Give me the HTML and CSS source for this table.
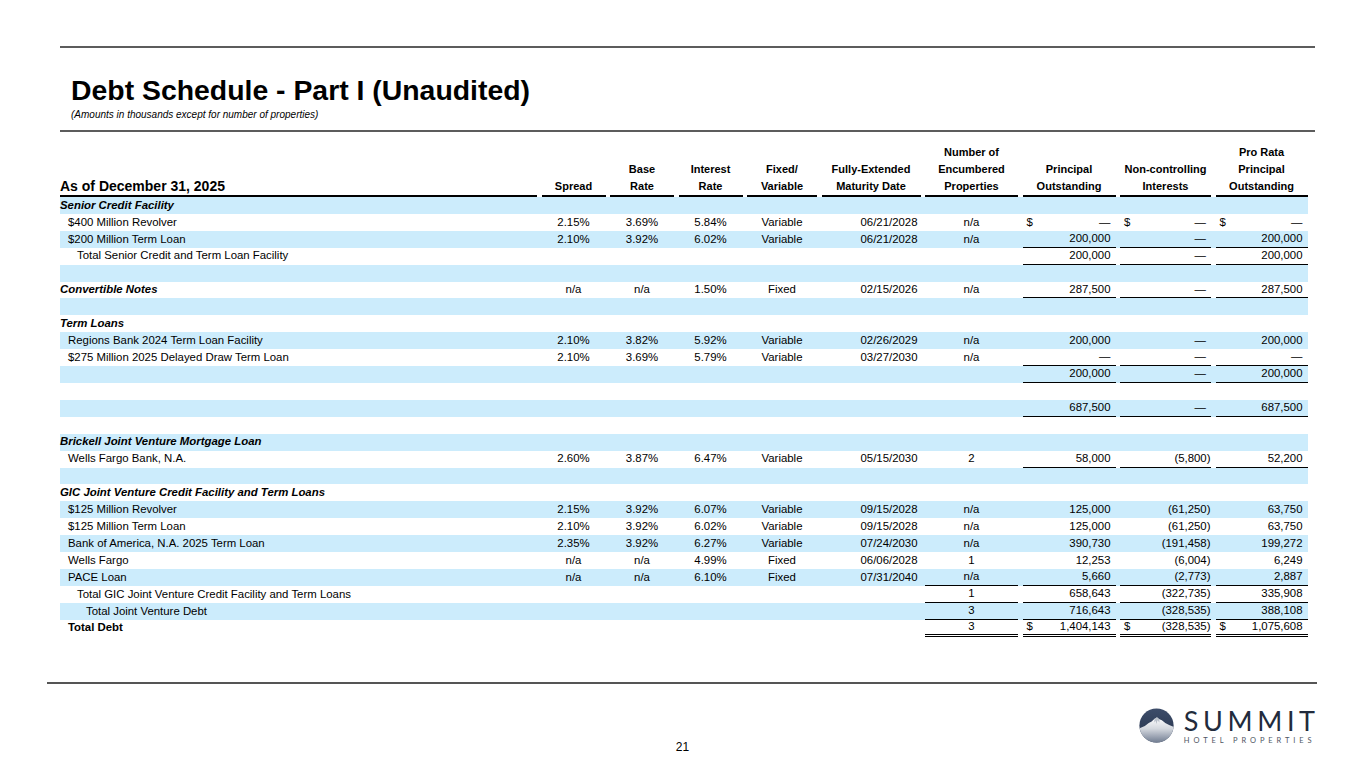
FILE: index.html
```html
<!DOCTYPE html>
<html lang="en">
<head>
<meta charset="utf-8">
<title>Debt Schedule - Part I (Unaudited)</title>
<link rel="stylesheet" href="styles.css">
</head>
<body>
<div class="slide">
  <header class="head">
    <div class="rule"></div>
    <h1 class="title">Debt Schedule - Part I (Unaudited)</h1>
    <p class="sub">(Amounts in thousands except for number of properties)</p>
    <div class="rule rule2"></div>
  </header>

  <section class="tbl">
    <div class="thead">
      <div class="th th-label">As of December 31, 2025</div>
      <div class="th">Spread</div>
      <div class="th">Base<br>Rate</div>
      <div class="th">Interest<br>Rate</div>
      <div class="th">Fixed/<br>Variable</div>
      <div class="th">Fully-Extended<br>Maturity Date</div>
      <div class="th">Number of<br>Encumbered<br>Properties</div>
      <div class="th">Principal<br>Outstanding</div>
      <div class="th">Non-controlling<br>Interests</div>
      <div class="th">Pro Rata<br>Principal<br>Outstanding</div>
    </div>

    <div class="tr b"><div class="l sec">Senior Credit Facility</div></div>
    <div class="tr">
      <div class="l i1">$400 Million Revolver</div>
      <div class="c">2.15%</div><div class="c">3.69%</div><div class="c">5.84%</div><div class="c">Variable</div><div class="m">06/21/2028</div><div class="c">n/a</div>
      <div class="d"><span>$</span><span>—</span></div><div class="d"><span>$</span><span>—</span></div><div class="d"><span>$</span><span>—</span></div>
    </div>
    <div class="tr b">
      <div class="l i1">$200 Million Term Loan</div>
      <div class="c">2.10%</div><div class="c">3.92%</div><div class="c">6.02%</div><div class="c">Variable</div><div class="m">06/21/2028</div><div class="c">n/a</div>
      <div class="n u">200,000</div><div class="n u">—</div><div class="n u">200,000</div>
    </div>
    <div class="tr">
      <div class="l i2">Total Senior Credit and Term Loan Facility</div>
      <div></div><div></div><div></div><div></div><div></div><div></div>
      <div class="n u">200,000</div><div class="n u">—</div><div class="n u">200,000</div>
    </div>
    <div class="tr b"></div>
    <div class="tr">
      <div class="l sec">Convertible Notes</div>
      <div class="c">n/a</div><div class="c">n/a</div><div class="c">1.50%</div><div class="c">Fixed</div><div class="m">02/15/2026</div><div class="c">n/a</div>
      <div class="n u">287,500</div><div class="n u">—</div><div class="n u">287,500</div>
    </div>
    <div class="tr b"></div>
    <div class="tr"><div class="l sec">Term Loans</div></div>
    <div class="tr b">
      <div class="l i1">Regions Bank 2024 Term Loan Facility</div>
      <div class="c">2.10%</div><div class="c">3.82%</div><div class="c">5.92%</div><div class="c">Variable</div><div class="m">02/26/2029</div><div class="c">n/a</div>
      <div class="n">200,000</div><div class="n">—</div><div class="n">200,000</div>
    </div>
    <div class="tr">
      <div class="l i1">$275 Million 2025 Delayed Draw Term Loan</div>
      <div class="c">2.10%</div><div class="c">3.69%</div><div class="c">5.79%</div><div class="c">Variable</div><div class="m">03/27/2030</div><div class="c">n/a</div>
      <div class="n u">—</div><div class="n u">—</div><div class="n u">—</div>
    </div>
    <div class="tr b">
      <div class="l"></div>
      <div></div><div></div><div></div><div></div><div></div><div></div>
      <div class="n u">200,000</div><div class="n u">—</div><div class="n u">200,000</div>
    </div>
    <div class="tr"></div>
    <div class="tr b">
      <div class="l"></div>
      <div></div><div></div><div></div><div></div><div></div><div></div>
      <div class="n u">687,500</div><div class="n u">—</div><div class="n u">687,500</div>
    </div>
    <div class="tr"></div>
    <div class="tr b"><div class="l sec">Brickell Joint Venture Mortgage Loan</div></div>
    <div class="tr">
      <div class="l i1">Wells Fargo Bank, N.A.</div>
      <div class="c">2.60%</div><div class="c">3.87%</div><div class="c">6.47%</div><div class="c">Variable</div><div class="m">05/15/2030</div><div class="c">2</div>
      <div class="n u">58,000</div><div class="n u neg">(5,800)</div><div class="n u">52,200</div>
    </div>
    <div class="tr b"></div>
    <div class="tr"><div class="l sec">GIC Joint Venture Credit Facility and Term Loans</div></div>
    <div class="tr b">
      <div class="l i1">$125 Million Revolver</div>
      <div class="c">2.15%</div><div class="c">3.92%</div><div class="c">6.07%</div><div class="c">Variable</div><div class="m">09/15/2028</div><div class="c">n/a</div>
      <div class="n">125,000</div><div class="n neg">(61,250)</div><div class="n">63,750</div>
    </div>
    <div class="tr">
      <div class="l i1">$125 Million Term Loan</div>
      <div class="c">2.10%</div><div class="c">3.92%</div><div class="c">6.02%</div><div class="c">Variable</div><div class="m">09/15/2028</div><div class="c">n/a</div>
      <div class="n">125,000</div><div class="n neg">(61,250)</div><div class="n">63,750</div>
    </div>
    <div class="tr b">
      <div class="l i1">Bank of America, N.A. 2025 Term Loan</div>
      <div class="c">2.35%</div><div class="c">3.92%</div><div class="c">6.27%</div><div class="c">Variable</div><div class="m">07/24/2030</div><div class="c">n/a</div>
      <div class="n">390,730</div><div class="n neg">(191,458)</div><div class="n">199,272</div>
    </div>
    <div class="tr">
      <div class="l i1">Wells Fargo</div>
      <div class="c">n/a</div><div class="c">n/a</div><div class="c">4.99%</div><div class="c">Fixed</div><div class="m">06/06/2028</div><div class="c">1</div>
      <div class="n">12,253</div><div class="n neg">(6,004)</div><div class="n">6,249</div>
    </div>
    <div class="tr b">
      <div class="l i1">PACE Loan</div>
      <div class="c">n/a</div><div class="c">n/a</div><div class="c">6.10%</div><div class="c">Fixed</div><div class="m">07/31/2040</div><div class="c u">n/a</div>
      <div class="n u">5,660</div><div class="n u neg">(2,773)</div><div class="n u">2,887</div>
    </div>
    <div class="tr">
      <div class="l i2">Total GIC Joint Venture Credit Facility and Term Loans</div>
      <div></div><div></div><div></div><div></div><div></div><div class="c u">1</div>
      <div class="n u">658,643</div><div class="n u neg">(322,735)</div><div class="n u">335,908</div>
    </div>
    <div class="tr b">
      <div class="l i3">Total Joint Venture Debt</div>
      <div></div><div></div><div></div><div></div><div></div><div class="c u">3</div>
      <div class="n u">716,643</div><div class="n u neg">(328,535)</div><div class="n u">388,108</div>
    </div>
    <div class="tr">
      <div class="l i1 strong">Total Debt</div>
      <div></div><div></div><div></div><div></div><div></div><div class="c uu">3</div>
      <div class="d uu"><span>$</span><span>1,404,143</span></div><div class="d uu neg"><span>$</span><span>(328,535)</span></div><div class="d uu"><span>$</span><span>1,075,608</span></div>
    </div>
  </section>

  <div class="rule rule3"></div>

  <footer class="foot">
    <div></div>
    <div class="pnum">21</div>
    <div class="logo">
      <svg class="mark" width="35" height="35" viewBox="0 0 36 36" aria-hidden="true">
        <defs>
          <clipPath id="lc"><circle cx="18" cy="18" r="17.6"/></clipPath>
          <linearGradient id="sky" x1="0" y1="0" x2="0" y2="1">
            <stop offset="0" stop-color="#3d4d6a"/>
            <stop offset="1" stop-color="#243149"/>
          </linearGradient>
          <linearGradient id="mt" x1="0" y1="0" x2="0" y2="1">
            <stop offset="0" stop-color="#ffffff"/>
            <stop offset="0.45" stop-color="#d3d7de"/>
            <stop offset="1" stop-color="#6e7a8f"/>
          </linearGradient>
        </defs>
        <g clip-path="url(#lc)">
          <rect width="36" height="36" fill="url(#sky)"/>
          <path d="M0 21 L6 18.5 L10 15.5 L13 14 L16 11 L18.5 9.5 L21 11.5 L23.5 12.5 L27 15.5 L31 17.5 L36 19.5 L36 36 L0 36 Z" fill="url(#mt)"/>
          <path d="M16 11 L15.5 15 L17 13 L18 16.5 L19 12.5 L21 15 L21 11.5 L18.5 9.5 Z" fill="#8d97a8" opacity="0.55"/>
        </g>
      </svg>
      <div class="wordmark">
        <div class="wm-main">SUMMIT</div>
        <div class="wm-sub">HOTEL PROPERTIES</div>
      </div>
    </div>
  </footer>
</div>
</body>
</html>
```

FILE: styles.css
```css
* { box-sizing: border-box; }

html, body {
  margin: 0;
  padding: 0;
  background: #ffffff;
}

body {
  font-family: "Liberation Sans", Arial, sans-serif;
  color: #000000;
}

.slide {
  width: 1365px;
  height: 768px;
  overflow: hidden;
  display: flex;
  flex-direction: column;
}

/* ---------- header ---------- */
.head {
  padding: 46px 50px 0 60px;
}

.rule {
  height: 2px;
  background: #5c5c5c;
}

.title {
  margin: 26px 0 0 11px;
  font-size: 28.4px;
  line-height: 32px;
  font-weight: 700;
}

.sub {
  margin: 3px 0 0 11px;
  font-size: 10px;
  line-height: 12px;
  font-style: italic;
}

.rule2 {
  margin-top: 9px;
}

/* ---------- table ---------- */
.tbl {
  margin: 12px 0 0 60px;
  width: 1248px;
}

.thead,
.tr {
  display: grid;
  grid-template-columns: 477px 64px 64px 64px 70px 99px 93px 93px 91px 92px;
  column-gap: 4.5px;
}

.thead {
  align-items: end;
}

.th {
  font-size: 11px;
  font-weight: 700;
  line-height: 17px;
  text-align: center;
  border-bottom: 2px solid #000;
}

.th-label {
  text-align: left;
  font-size: 14px;
}

.tr {
  height: 16.92px;
  font-size: 11.4px;
}

.tr > div {
  display: flex;
  align-items: center;
  white-space: nowrap;
  line-height: 1;
}

.b {
  background: #ccecfc;
}

.l { padding-left: 0; }
.sec { font-weight: 700; font-style: italic; }
.strong { font-weight: 700; }
.i1 { padding-left: 8px; }
.i2 { padding-left: 17px; }
.i3 { padding-left: 26px; }

.c { justify-content: center; }
.m { justify-content: flex-end; padding-right: 3px; }
.n { justify-content: flex-end; padding-right: 5px; }
.d { justify-content: space-between; padding: 0 5px 0 4px; }
.tr > .neg { padding-right: 0.5px; }

.u { border-bottom: 1px solid #000; }
.uu { border-bottom: 3px double #000; }

/* ---------- footer ---------- */
.rule3 {
  margin: 45px 48px 0 47px;
  background: #555555;
}

.foot {
  display: grid;
  grid-template-columns: 1fr auto 1fr;
  margin-top: 23px;
}

.pnum {
  padding-top: 34px;
  font-size: 12px;
  line-height: 12px;
  color: #000;
}

.logo {
  justify-self: end;
  margin-right: 50px;
  display: flex;
  align-items: flex-start;
  gap: 10px;
}

.mark {
  display: block;
  margin-top: 1px;
}

.wordmark {
  display: flex;
  flex-direction: column;
}

.wm-main {
  font-family: Lato, "Open Sans", sans-serif;
  font-weight: 400;
  font-size: 27px;
  line-height: 27px;
  letter-spacing: 4.6px;
  margin-right: -4.6px;
  color: #222b3c;
}

.wm-sub {
  font-family: Lato, "Liberation Sans", sans-serif;
  font-size: 7.5px;
  line-height: 9px;
  letter-spacing: 3.9px;
  margin-right: -3.9px;
  color: #4f5663;
  margin-top: 2px;
}
```
